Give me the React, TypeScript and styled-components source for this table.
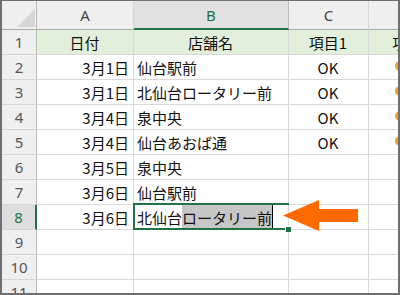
import * as React from 'react';
import styled, { createGlobalStyle, css } from 'styled-components';

const GlobalStyle = createGlobalStyle`
    body {
        margin: 0;
        background: #fff;
    }
`;

const Page = styled.div`
    position: relative;
    width: 400px;
    height: 295px;
    box-sizing: border-box;
    overflow: hidden;
    border: solid #6f6f6f;
    border-width: 1px 2px 2px 2px;
    background: #fff;
`;

const Grid = styled.div`
    display: grid;
    grid-template-columns: 35px 97px 155px 80px 80px;
    grid-template-rows: 29px repeat(11, 25px);
    font-family: 'Noto Sans CJK JP', 'Noto Sans', sans-serif;
    font-size: 15px;
    color: #111;
`;

const Corner = styled.div`
    position: relative;
    box-sizing: border-box;
    background: #efefef;
    border-right: 1px solid #bcbcbc;
    border-bottom: 1px solid #a8a8a8;

    > svg {
        position: absolute;
        left: 14px;
        top: 7px;
    }
`;

const ColHead = styled.div<{ $active?: boolean }>`
    box-sizing: border-box;
    display: flex;
    align-items: center;
    justify-content: center;
    font-family: 'Noto Sans', 'Liberation Sans', sans-serif;
    font-size: 15px;
    color: #444;
    background: #efefef;
    border-right: 1px solid #d6d6d6;
    border-bottom: 1px solid #a8a8a8;

    ${({ $active }) =>
        $active &&
        css`
            background: #e1e1e1;
            color: #217346;
            border-right-color: #bcbcbc;
            border-bottom: 2px solid #217346;
        `}
`;

const RowHead = styled.div<{ $active?: boolean }>`
    box-sizing: border-box;
    display: flex;
    align-items: center;
    justify-content: center;
    font-family: 'Noto Sans', 'Liberation Sans', sans-serif;
    font-size: 15px;
    color: #555;
    background: #efefef;
    border-right: 1px solid #bcbcbc;
    border-bottom: 1px solid #d6d6d6;

    ${({ $active }) =>
        $active &&
        css`
            background: #dedede;
            color: #217346;
            border-right: 2px solid #217346;
        `}
`;

const Cell = styled.div<{ $align?: 'left' | 'center' | 'right'; $tint?: boolean }>`
    box-sizing: border-box;
    display: flex;
    align-items: center;
    justify-content: ${({ $align }) =>
        $align === 'right' ? 'flex-end' : $align === 'center' ? 'center' : 'flex-start'};
    padding: 0 4px 0 3px;
    white-space: nowrap;
    overflow: hidden;
    background: ${({ $tint }) => ($tint ? '#e2efda' : '#fff')};
    border-right: 1px solid #d9d9d9;
    border-bottom: 1px solid #d9d9d9;
`;

// status dot in column D, only its left edge is in view
const Mark = styled.span`
    display: block;
    width: 10px;
    height: 10px;
    margin: 0 0 3px 23px;
    border-radius: 50%;
    background: #f0a030;
`;

// cell currently being edited: part of the text is selected, caret after it
const EditCell = styled.div`
    position: relative;
    box-sizing: border-box;
    display: flex;
    align-items: center;
    padding-left: 3px;
    white-space: nowrap;
    border-right: 1px solid #d9d9d9;
    border-bottom: 1px solid #d9d9d9;

    &::before {
        content: '';
        position: absolute;
        left: -1px;
        top: -2px;
        right: -1px;
        bottom: -1px;
        border: 2px solid #217346;
        border-right: none;
        pointer-events: none;
    }
`;

const Selected = styled.span`
    align-self: stretch;
    display: flex;
    align-items: center;
    background: #c6c6c6;
`;

const Caret = styled.span`
    align-self: stretch;
    width: 1px;
    background: #000;
`;

const FillHandle = styled.span`
    position: absolute;
    right: -3px;
    bottom: -3px;
    width: 5px;
    height: 5px;
    background: #217346;
    border: 1px solid #fff;
    border-width: 1px 0 0 1px;
`;

const Pointer = styled.svg`
    position: absolute;
    left: 281px;
    top: 199px;
`;

type Row = { date: string; shop: string; item: string; mark?: boolean };

const rows: Row[] = [
    { date: '3月1日', shop: '仙台駅前', item: 'OK', mark: true },
    { date: '3月1日', shop: '北仙台ロータリー前', item: 'OK', mark: true },
    { date: '3月4日', shop: '泉中央', item: 'OK', mark: true },
    { date: '3月4日', shop: '仙台あおば通', item: 'OK', mark: true },
    { date: '3月5日', shop: '泉中央', item: '' },
    { date: '3月6日', shop: '仙台駅前', item: '' },
];

const App = (): JSX.Element => (
    <>
        <GlobalStyle />
        <Page>
            <Grid>
                <Corner>
                    <svg width="20" height="20" viewBox="0 0 20 20">
                        <polygon points="19,1 19,19 1,19" fill="#d6d6d6" />
                    </svg>
                </Corner>
                <ColHead>A</ColHead>
                <ColHead $active>B</ColHead>
                <ColHead>C</ColHead>
                <ColHead>D</ColHead>

                <RowHead>1</RowHead>
                <Cell $align="center" $tint>日付</Cell>
                <Cell $align="center" $tint>店舗名</Cell>
                <Cell $align="center" $tint>項目1</Cell>
                <Cell $align="left" $tint>
                    &nbsp;&nbsp;&nbsp;&nbsp;&nbsp;&nbsp;項目2
                </Cell>

                {rows.map((r, i) => (
                    <React.Fragment key={i}>
                        <RowHead>{i + 2}</RowHead>
                        <Cell $align="right">{r.date}</Cell>
                        <Cell>{r.shop}</Cell>
                        <Cell $align="center">{r.item}</Cell>
                        <Cell $align="left">{r.mark && <Mark />}</Cell>
                    </React.Fragment>
                ))}

                <RowHead $active>8</RowHead>
                <Cell $align="right">3月6日</Cell>
                <EditCell>
                    北仙台
                    <Selected>ロータリー前</Selected>
                    <Caret />
                    <FillHandle />
                </EditCell>
                <Cell />
                <Cell />

                {[9, 10, 11].map((n) => (
                    <React.Fragment key={n}>
                        <RowHead>{n}</RowHead>
                        <Cell />
                        <Cell />
                        <Cell />
                        <Cell />
                    </React.Fragment>
                ))}
            </Grid>

            <Pointer width="75" height="31" viewBox="0 0 75 31">
                <polygon points="0,15.5 36,0 36,9 75,9 75,22 36,22 36,31" fill="#ff6a00" />
            </Pointer>
        </Page>
    </>
);

export default App;
